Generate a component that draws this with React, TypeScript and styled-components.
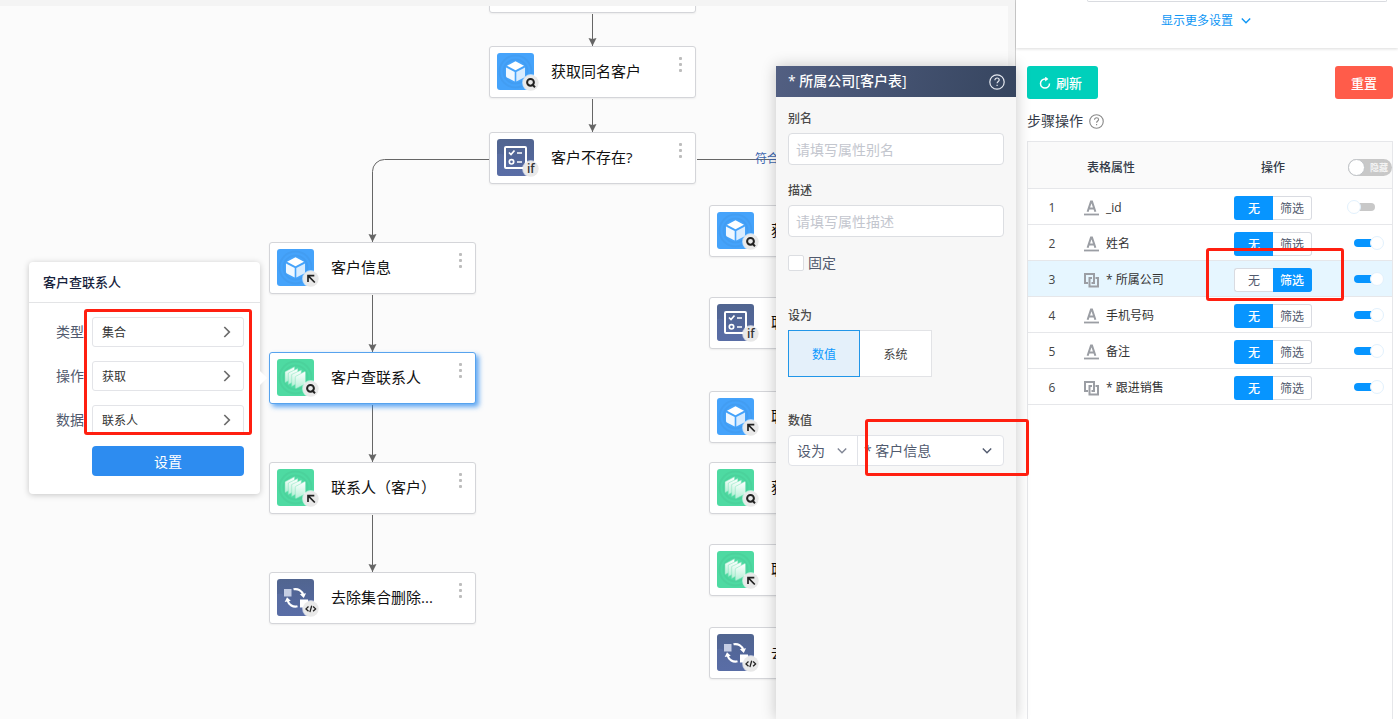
import React, { useState } from 'react';
import styled, { createGlobalStyle, css } from 'styled-components';

const GlobalStyle = createGlobalStyle`
  *, *::before, *::after { box-sizing: border-box; }
  body {
    margin: 0;
    font-family: "Open Sans", "Noto Sans CJK SC", sans-serif;
    font-size: 12px;
    color: #333;
    background: #fff;
  }
  button, input, select { font-family: inherit; margin: 0; }
  button { cursor: pointer; padding: 0; }
`;

/* ---------- page ---------- */

const Page = styled.div`
  display: flex;
  min-height: 100vh;
  overflow: hidden;
`;

const Workspace = styled.main`
  position: relative;
  flex: 1;
  min-width: 0;
  z-index: 1;
`;

const Canvas = styled.div`
  position: absolute;
  inset: 0;
  overflow: hidden;
  background: #fbfbfb;
  border-top: 6px solid #f4f4f4;
  border-right: 7px solid #f4f4f4;
`;

const Plane = styled.div`
  position: absolute;
  left: 0;
  top: -6px;
`;

const Highlight = styled.div<{ $x: number; $y: number; $w: number; $h: number }>`
  position: absolute;
  left: ${(p) => p.$x}px;
  top: ${(p) => p.$y}px;
  width: ${(p) => p.$w}px;
  height: ${(p) => p.$h}px;
  border: 3px solid #ff1f10;
  border-radius: 3px;
  pointer-events: none;
`;

/* ---------- flow nodes ---------- */

const Edges = styled.svg`
  position: absolute;
  left: 0;
  top: 0;
  overflow: visible;
`;

const EdgeLabel = styled.span`
  position: absolute;
  left: 755px;
  top: 150px;
  line-height: 18px;
  white-space: nowrap;
  color: #3f68b0;
`;

const NodeBox = styled.div<{ $x: number; $y: number; $active?: boolean }>`
  position: absolute;
  left: ${(p) => p.$x}px;
  top: ${(p) => p.$y}px;
  width: 207px;
  height: 52px;
  display: flex;
  align-items: flex-start;
  padding: 6px 13px 0 7px;
  background: #fff;
  border: 1px solid #d4d5d9;
  border-radius: 3px;
  box-shadow: 0 1px 2px rgba(0, 0, 0, 0.06);
  ${(p) =>
    p.$active &&
    css`
      border-color: #57a3ee;
      box-shadow: 3px 3px 5px rgba(45, 140, 240, 0.75);
    `}
`;

const NodeTitle = styled.span`
  flex: 1;
  margin-left: 10px;
  font-size: 15px;
  line-height: 36px;
  white-space: nowrap;
  color: #111;
`;

const MoreButton = styled.button`
  display: flex;
  flex-direction: column;
  gap: 3px;
  margin-top: 4px;
  border: 0;
  background: none;
  i {
    width: 3px;
    height: 3px;
    border-radius: 1px;
    background: #bdbdbd;
  }
`;

type Kind = 'cube' | 'check' | 'stack' | 'cycle';
type Badge = 'search' | 'arrow' | 'if' | 'code';

const fills: Record<Kind, string> = {
  cube: '#45a3fb',
  check: 'url(#navy)',
  stack: '#4edaa2',
  cycle: 'url(#navy)',
};

function NodeIcon({ kind, badge }: { kind: Kind; badge: Badge }) {
  return (
    <svg width="44" height="40" viewBox="0 0 44 40" fill="none" aria-hidden="true">
      <rect width="37" height="37" rx="3" fill={fills[kind]} />
      {(kind === 'cube' || kind === 'stack') && (
        <g stroke="#000" strokeOpacity=".035" strokeWidth="2">
          <circle cx="18.5" cy="18.5" r="12" />
          <circle cx="18.5" cy="18.5" r="16" />
        </g>
      )}
      {(kind === 'check' || kind === 'cycle') && (
        <path d="M0 15c5-2 8 2 9 6s7 7 12 6 9-3 16-1v8a3 3 0 0 1-3 3H3a3 3 0 0 1-3-3z" fill="#5f73ab" fillOpacity=".45" />
      )}
      {kind === 'cube' && (
        <g>
          <path d="M18.500 8.200 27 12.700 18.500 17.200 10 12.700z" fill="#fff" />
          <path d="M9 14.500 17.700 19v9.500L9.800 24.400a1.500 1.500 0 0 1-.8-1.300z" fill="#f0f8ff" />
          <path d="M28 14.500 19.300 19v9.500l7.900-4.100a1.500 1.500 0 0 0 .8-1.300z" fill="#d8ecff" />
        </g>
      )}
      {kind === 'check' && (
        <g stroke="#fff">
          <rect x="8" y="8" width="21" height="21" rx="1" strokeWidth="2" />
          <path d="m12 13.500 2 2 3.500-4M20 14h5M20 23h5" strokeWidth="1.700" />
          <circle cx="14.500" cy="22.800" r="2.200" strokeWidth="1.700" />
        </g>
      )}
      {kind === 'stack' && (
        <g stroke="#7fe3bb" strokeWidth=".5">
          <path d="m8 12.800 9.500-5v11L8 23.500z" fill="url(#sheet)" />
          <path d="m11.300 14 9.500-4.500v11l-9.500 5z" fill="url(#sheet)" />
          <path d="m14.700 15.500 9.600-4.500v11l-9.600 5.400z" fill="url(#sheet)" />
          <path d="M18.300 18.200a1 1 0 0 1 .6-.9l8.300-4.500a.9.900 0 0 1 1.300.8v11.200l-9 4.500a.9.900 0 0 1-1.200-.8z" fill="url(#sheet)" />
        </g>
      )}
      {kind === 'cycle' && (
        <g>
          <rect x="7" y="10" width="7.500" height="7.500" fill="#c5cee4" />
          <rect x="23" y="20.500" width="8" height="8" fill="#fff" />
          <path d="M16.500 10.300a8 8 0 0 1 9.700 5.700M20.500 27.300a8 8 0 0 1-9.900-5.800" stroke="#fff" strokeWidth="2.200" />
          <path d="m22.800 15.200 6.200-.9-2.200 4.700zM7.700 23l2.300-4.700 3.800 3.500z" fill="#fff" />
        </g>
      )}
      <circle cx="33.800" cy="29.800" r="8.700" fill="#fff" fillOpacity=".6" />
      <circle cx="33.800" cy="29.800" r="7.900" fill="#e9e9e9" />
      {badge === 'search' && (
        <g stroke="#222" strokeWidth="2">
          <circle cx="33.500" cy="29.300" r="3.400" />
          <path d="m35 31.300 3 3" />
        </g>
      )}
      {badge === 'arrow' && <path d="M31 33v-6.300h6.300M31 26.700l6.800 6.800" stroke="#222" strokeWidth="1.700" />}
      {badge === 'if' && (
        <text x="33.800" y="34" textAnchor="middle" fontSize="12" fontWeight="600" fill="#333">
          if
        </text>
      )}
      {badge === 'code' && (
        <path d="m31.500 27.500-2.500 2.400 2.500 2.400M36.100 27.500l2.500 2.400-2.500 2.400M34.700 26.700l-1.800 6.400" stroke="#222" strokeWidth="1.300" />
      )}
    </svg>
  );
}

interface FlowNode {
  x: number;
  y: number;
  kind: Kind;
  badge: Badge;
  title: string;
  active?: boolean;
}

const nodes: FlowNode[] = [
  { x: 489, y: 46, kind: 'cube', badge: 'search', title: '获取同名客户' },
  { x: 489, y: 132, kind: 'check', badge: 'if', title: '客户不存在?' },
  { x: 269, y: 242, kind: 'cube', badge: 'arrow', title: '客户信息' },
  { x: 269, y: 352, kind: 'stack', badge: 'search', title: '客户查联系人', active: true },
  { x: 269, y: 462, kind: 'stack', badge: 'arrow', title: '联系人（客户）' },
  { x: 269, y: 572, kind: 'cycle', badge: 'code', title: '去除集合删除...' },
  { x: 709, y: 205, kind: 'cube', badge: 'search', title: '获' },
  { x: 709, y: 297, kind: 'check', badge: 'if', title: '联' },
  { x: 709, y: 391, kind: 'cube', badge: 'arrow', title: '联' },
  { x: 709, y: 462, kind: 'stack', badge: 'search', title: '获' },
  { x: 709, y: 544, kind: 'stack', badge: 'arrow', title: '联' },
  { x: 709, y: 627, kind: 'cycle', badge: 'code', title: '去' },
];

const arrows = [
  [592, 14, 46],
  [592, 99, 132],
  [372, 295, 352],
  [372, 405, 462],
  [372, 515, 572],
];

function Flow() {
  return (
    <Plane>
      <Edges width="1" height="1" aria-hidden="true">
        <defs>
          <linearGradient id="navy" x1="0" y1="0" x2="0" y2="1">
            <stop offset="0" stopColor="#516590" />
            <stop offset="1" stopColor="#5468a2" />
          </linearGradient>
          <linearGradient id="sheet" x1="0" y1="0" x2="0" y2="1">
            <stop offset="0" stopColor="#fff" />
            <stop offset="1" stopColor="#b4f0d6" />
          </linearGradient>
          <marker id="head" markerWidth="9" markerHeight="9" refX="8" refY="4.500" orient="auto" markerUnits="userSpaceOnUse">
            <path d="M0 .5 8 4.500 0 8.500 1 4.500z" fill="#666" />
          </marker>
        </defs>
        <g stroke="#666" fill="none">
          {arrows.map(([x, from, to]) => (
            <path key={`${x}-${from}`} d={`M${x + 0.5} ${from}V${to}`} markerEnd="url(#head)" />
          ))}
          <path d="M489 159.500H384.500a12 12 0 0 0-12 12V242" markerEnd="url(#head)" />
          <path d="M697 159.500H790" />
        </g>
      </Edges>
      <EdgeLabel>符合</EdgeLabel>
      <NodeBox $x={489} $y={-39} />
      {nodes.map((n) => (
        <NodeBox key={`${n.x}-${n.y}`} $x={n.x} $y={n.y} $active={n.active}>
          <NodeIcon kind={n.kind} badge={n.badge} />
          <NodeTitle>{n.title}</NodeTitle>
          <MoreButton aria-haspopup="menu">
            <i />
            <i />
            <i />
          </MoreButton>
        </NodeBox>
      ))}
    </Plane>
  );
}

/* ---------- node popover ---------- */

const Popover = styled.section`
  position: absolute;
  left: 29px;
  top: 262px;
  width: 231px;
  padding-bottom: 18px;
  background: #fff;
  border-radius: 4px;
  box-shadow: 0 1px 6px rgba(0, 0, 0, 0.22);
  &::after {
    content: '';
    position: absolute;
    right: -5px;
    top: 111px;
    width: 10px;
    height: 10px;
    background: #fff;
    transform: rotate(45deg);
  }
`;

const PopoverTitle = styled.h2`
  margin: 0;
  padding: 0 14px;
  font-size: 13px;
  font-weight: 500;
  line-height: 40px;
  color: #17233d;
  border-bottom: 1px solid #e3e4e6;
`;

const Fields = styled.div`
  display: flex;
  flex-direction: column;
  gap: 14px;
  padding: 14px 16px 11px 27px;
`;

const Field = styled.div`
  display: flex;
  align-items: center;
  justify-content: space-between;
  font-size: 14px;
  line-height: 18px;
  color: #515a6e;
`;

const PickButton = styled.button`
  display: flex;
  align-items: center;
  justify-content: space-between;
  width: 152px;
  height: 30px;
  padding: 0 12px 0 9px;
  font-size: 12px;
  color: #333;
  background: #fff;
  border: 1px solid #e3e4e8;
  border-radius: 3px;
`;

const PrimaryButton = styled.button`
  display: block;
  width: 152px;
  height: 30px;
  margin-left: 63px;
  font-size: 14px;
  color: #fff;
  background: #2d8cf0;
  border: 0;
  border-radius: 4px;
`;

const pickers = [
  ['类型', '集合'],
  ['操作', '获取'],
  ['数据', '联系人'],
];

function NodePopover() {
  return (
    <Popover>
      <PopoverTitle>客户查联系人</PopoverTitle>
      <Fields>
        {pickers.map(([label, value], i) => (
          <Field key={label}>
            <label htmlFor={`pick-${i}`}>{label}</label>
            <PickButton id={`pick-${i}`}>
              {value}
              <svg width="8" height="12" viewBox="0 0 8 12" fill="none" stroke="#6b6b6b" strokeWidth="1.700">
                <path d="m1.300 1 5 5-5 5" />
              </svg>
            </PickButton>
          </Field>
        ))}
      </Fields>
      <PrimaryButton>设置</PrimaryButton>
      <Highlight $x={55} $y={47} $w={168} $h={126} />
    </Popover>
  );
}

/* ---------- property panel ---------- */

const PropertyPanel = styled.section`
  position: absolute;
  top: 66px;
  right: -1px;
  bottom: 0;
  width: 240px;
  background: #f7f7f7;
  box-shadow: 0 0 14px rgba(0, 0, 0, 0.22);
`;

const PanelHeader = styled.header`
  display: flex;
  align-items: center;
  justify-content: space-between;
  height: 31px;
  padding: 0 11px 0 12px;
  background: linear-gradient(100deg, #525f82, #36455f);
  color: #fff;
`;

const PanelTitle = styled.h2`
  margin: 0;
  font-size: 14px;
  font-weight: 500;
  line-height: 29px;
  height: 31px;
`;

const PanelBody = styled.div`
  display: flex;
  flex-direction: column;
  padding: 13px 12px;
`;

const Group = styled.div<{ $gap: number }>`
  display: flex;
  flex-direction: column;
  gap: 5px;
  margin-bottom: ${(p) => p.$gap}px;
`;

const GroupLabel = styled.label`
  font-size: 12px;
  font-weight: 500;
  line-height: 18px;
  color: #4a4a4a;
`;

const TextInput = styled.input`
  width: 100%;
  height: 32px;
  padding: 0 7px;
  font-size: 14px;
  color: #515a6e;
  background: #fff;
  border: 1px solid #dcdee2;
  border-radius: 4px;
  &::placeholder { color: #c3c6ce; }
`;

const FixedRow = styled.label`
  display: flex;
  align-items: center;
  gap: 4px;
  height: 20px;
  margin-bottom: 34px;
  font-size: 14px;
  line-height: 20px;
  color: #515a6e;
`;

const CheckBox = styled.input`
  appearance: none;
  width: 16px;
  height: 16px;
  background: #fff;
  border: 1px solid #dcdee2;
  border-radius: 2px;
  &:checked { background: #2d8cf0; }
`;

const ModeRow = styled.div`
  display: flex;
`;

const ModeButton = styled.button<{ $on: boolean }>`
  width: 72px;
  height: 47px;
  font-size: 12px;
  color: ${(p) => (p.$on ? '#0d99ff' : '#444')};
  background: ${(p) => (p.$on ? '#e4f0fa' : '#fff')};
  border: 1px solid ${(p) => (p.$on ? '#2196e8' : '#e2e3e6')};
  ${(p) => !p.$on && 'border-left: 0;'}
`;

const SelectRow = styled.div`
  display: flex;
  height: 31px;
  background: #fff;
  border: 1px solid #e1e3e8;
  border-radius: 4px;
`;

const SelectCell = styled.div<{ $grow?: boolean }>`
  display: flex;
  align-items: center;
  ${(p) =>
    p.$grow
      ? 'flex: 1; padding: 0 11px 0 6px;'
      : 'width: 69px; padding: 0 10px 0 8px; border-right: 1px solid #e1e3e8;'}
`;

const Select = styled.select`
  appearance: none;
  flex: 1;
  min-width: 0;
  height: 29px;
  padding: 0;
  border: 0;
  background: none;
  font-size: 14px;
  color: #515a6e;
`;

function Chevron({ color }: { color: string }) {
  return (
    <svg width="10" height="6" viewBox="0 0 10 6" fill="none" stroke={color} strokeWidth="1.400" aria-hidden="true">
      <path d="m.8.600 4.200 4.200L9.200.600" />
    </svg>
  );
}

function HelpIcon({ size, color }: { size: number; color: string }) {
  return (
    <svg width={size} height={size} viewBox="0 0 16 16" fill="none" stroke={color} strokeWidth="1.200" aria-hidden="true">
      <circle cx="8" cy="8" r="7.200" />
      <path d="M5.900 6.200c0-1.300.9-2.200 2.200-2.200s2.100.8 2.100 1.900c0 1.500-2.100 1.600-2.100 3.400M8.100 10.700v1.400" />
    </svg>
  );
}

function Properties() {
  const [mode, setMode] = useState('数值');
  return (
    <PropertyPanel>
      <PanelHeader>
        <PanelTitle>* 所属公司[客户表]</PanelTitle>
        <HelpIcon size={16} color="#e6e9f0" />
      </PanelHeader>
      <PanelBody>
        <Group $gap={17}>
          <GroupLabel htmlFor="alias">别名</GroupLabel>
          <TextInput id="alias" placeholder="请填写属性别名" />
        </Group>
        <Group $gap={16}>
          <GroupLabel htmlFor="desc">描述</GroupLabel>
          <TextInput id="desc" placeholder="请填写属性描述" />
        </Group>
        <FixedRow>
          <CheckBox type="checkbox" />
          固定
        </FixedRow>
        <Group $gap={35}>
          <GroupLabel as="span">设为</GroupLabel>
          <ModeRow>
            {['数值', '系统'].map((m) => (
              <ModeButton key={m} $on={mode === m} aria-pressed={mode === m} onClick={() => setMode(m)}>
                {m}
              </ModeButton>
            ))}
          </ModeRow>
        </Group>
        <Group $gap={0}>
          <GroupLabel htmlFor="value">数值</GroupLabel>
          <SelectRow>
            <SelectCell>
              <Select id="operator">
                <option>设为</option>
              </Select>
              <Chevron color="#808695" />
            </SelectCell>
            <SelectCell $grow>
              <Select id="value">
                <option>* 客户信息</option>
              </Select>
              <Chevron color="#515a6e" />
            </SelectCell>
          </SelectRow>
        </Group>
      </PanelBody>
      <Highlight $x={89} $y={353} $w={164} $h={57} />
    </PropertyPanel>
  );
}

/* ---------- side panel ---------- */

const Side = styled.aside`
  display: flex;
  flex-direction: column;
  width: 383px;
  background: #fff;
  border-left: 1px solid #cfcfcf;
`;

const MoreSection = styled.div`
  display: flex;
  flex-direction: column;
  align-items: center;
  height: 48px;
  padding: 0 11px 0 71px;
  box-shadow: 0 1px 3px rgba(0, 0, 0, 0.14);
`;

const FieldEdge = styled.div`
  width: 100%;
  height: 2px;
  border: 1px solid #d9dbe0;
  border-top: 0;
  border-radius: 0 0 3px 3px;
`;

const MoreLink = styled.a`
  display: flex;
  align-items: center;
  align-self: flex-start;
  gap: 8px;
  margin: 10px 0 0 74px;
  font-size: 12px;
  line-height: 18px;
  color: #0d96f5;
  text-decoration: none;
`;

const SideBody = styled.div`
  display: flex;
  flex: 1;
  flex-direction: column;
  padding: 18px 5px 0 11px;
`;

const Actions = styled.div`
  display: flex;
  justify-content: space-between;
`;

const ActionButton = styled.button<{ $color: string; $icon?: boolean }>`
  display: flex;
  align-items: center;
  gap: 5px;
  height: 33px;
  padding: 0 16px 0 ${(p) => (p.$icon ? 12 : 16)}px;
  font-size: 13px;
  font-weight: 500;
  color: #fff;
  background: ${(p) => p.$color};
  border: 0;
  border-radius: 3px;
`;

const StepHeading = styled.h3`
  display: flex;
  align-items: center;
  gap: 6px;
  margin: 12px 0 10px;
  font-size: 14px;
  font-weight: 400;
  line-height: 20px;
  color: #333a48;
`;

const TableBox = styled.div`
  position: relative;
  flex: 1;
  border: 1px solid #e6e7ea;
  border-bottom: 0;
`;

const Table = styled.table`
  width: 100%;
  table-layout: fixed;
  border-collapse: separate;
  border-spacing: 0;
  th, td {
    padding: 0;
    border-bottom: 1px solid #e6e7ea;
    text-align: left;
  }
  td { padding-top: 2px; }
`;

const HeadCell = styled.th<{ $pad: number; $w?: number; $center?: boolean }>`
  && {
    height: 47px;
    width: ${(p) => (p.$w ? `${p.$w}px` : 'auto')};
    padding: 4px 0 0 ${(p) => p.$pad}px;
    text-align: ${(p) => (p.$center ? 'center' : 'left')};
  }
  background: #fafafa;
  font-size: 12px;
  font-weight: 500;
  color: #333a48;
`;

const Row = styled.tr<{ $active: boolean }>`
  height: 36px;
  background: ${(p) => (p.$active ? '#e6f6ff' : '#fff')};
`;

const IndexCell = styled.td`
  && { text-align: center; }
  font-size: 12px;
  color: #444;
`;

const NameWrap = styled.div`
  display: flex;
  align-items: center;
  gap: 7px;
  padding-left: 8px;
  font-size: 12px;
  line-height: 18px;
  color: #333;
`;

const Segments = styled.div`
  display: flex;
  width: 78px;
  height: 24px;
  margin: 0 auto;
`;

const Segment = styled.button<{ $on: boolean }>`
  width: 39px;
  height: 24px;
  font-size: 12px;
  font-weight: ${(p) => (p.$on ? 500 : 400)};
  color: ${(p) => (p.$on ? '#fff' : '#515a6e')};
  background: ${(p) => (p.$on ? '#0795ff' : '#fff')};
  border: 1px solid ${(p) => (p.$on ? '#0795ff' : '#d9dbe1')};
  &:first-child { border-radius: 3px 0 0 3px; border-right-width: 0; }
  &:last-child { border-radius: 0 3px 3px 0; border-left-width: 0; }
`;

const SwitchCell = styled.td`
  && { padding: 0 0 0 14px; }
  line-height: 0;
`;

const Switch = styled.input`
  appearance: none;
  position: relative;
  display: block;
  width: 37px;
  height: 14px;
  &::before {
    content: '';
    position: absolute;
    left: 7px;
    top: 3px;
    width: 21px;
    height: 8px;
    border-radius: 4px;
    background: #c8c8c8;
  }
  &::after {
    content: '';
    position: absolute;
    left: 0;
    top: 0;
    width: 14px;
    height: 14px;
    border-radius: 7px;
    background: #fff;
    border: 1px solid #e2f1fd;
  }
  &:checked::before { background: #0795ff; }
  &:checked::after { left: 23px; }
`;

const HideSwitch = styled.button`
  display: flex;
  align-items: center;
  justify-content: space-between;
  width: 44px;
  height: 17px;
  padding-right: 4px;
  font-size: 9px;
  font-weight: 700;
  line-height: 17px;
  color: #f4f4f4;
  background: #c8c8c8;
  border: 0;
  border-radius: 9px;
  &::before {
    content: '';
    width: 17px;
    height: 17px;
    border: 1px solid #c0c4c8;
    border-radius: 9px;
    background: #fff;
  }
`;

function TextTypeIcon() {
  return (
    <svg width="15" height="16" viewBox="0 0 15 16" fill="none" stroke="#9b9ea4" aria-hidden="true">
      <path d="M3.600 11.700 7 1.600h1l3.400 10.100M4.900 8.500h5.200" strokeWidth="2" />
      <path d="M0 14.500h15" strokeWidth="1.800" />
    </svg>
  );
}

function LinkTypeIcon() {
  return (
    <svg width="15" height="16" viewBox="0 0 15 16" fill="none" stroke="#9b9ea4" strokeWidth="2" aria-hidden="true">
      <path d="M4 11H1V2h9v9H7.500" />
      <path d="M11.500 6H14v8.500H5.500V6H8" />
    </svg>
  );
}

interface Attribute {
  name: string;
  relation?: boolean;
  filter?: boolean;
  visible: boolean;
}

const attributes: Attribute[] = [
  { name: '_id', visible: false },
  { name: '姓名', visible: true },
  { name: '* 所属公司', relation: true, filter: true, visible: true },
  { name: '手机号码', visible: true },
  { name: '备注', visible: true },
  { name: '* 跟进销售', relation: true, visible: true },
];

function SidePanel() {
  return (
    <Side>
      <MoreSection>
        <FieldEdge />
        <MoreLink href="#more">
          显示更多设置
          <Chevron color="#0d96f5" />
        </MoreLink>
      </MoreSection>
      <SideBody>
        <Actions>
          <ActionButton $color="#00d0bb" $icon>
            <svg width="12" height="12" viewBox="0 0 12 12" fill="none" stroke="#fff" strokeWidth="1.500" aria-hidden="true">
              <path d="M7.200 2H6a4.500 4.500 0 1 0 4.500 4.500" />
              <path d="m6.200-.5 3.200 2.500-3.200 2.500z" fill="#fff" stroke="none" />
            </svg>
            刷新
          </ActionButton>
          <ActionButton $color="#ff5c4a">重置</ActionButton>
        </Actions>
        <StepHeading>
          步骤操作
          <HelpIcon size={15} color="#8a8a8a" />
        </StepHeading>
        <TableBox>
          <Table>
            <thead>
              <tr>
                <HeadCell $pad={0} $w={48} />
                <HeadCell $pad={11}>表格属性</HeadCell>
                <HeadCell $pad={0} $w={120} $center>
                  操作
                </HeadCell>
                <HeadCell $pad={15} $w={59}>
                  <HideSwitch role="switch" aria-checked="false">
                    隐藏
                  </HideSwitch>
                </HeadCell>
              </tr>
            </thead>
            <tbody>
              {attributes.map((a, i) => (
                <Row key={a.name} $active={!!a.filter}>
                  <IndexCell>{i + 1}</IndexCell>
                  <td>
                    <NameWrap>
                      {a.relation ? <LinkTypeIcon /> : <TextTypeIcon />}
                      {a.name}
                    </NameWrap>
                  </td>
                  <td>
                    <Segments>
                      <Segment $on={!a.filter} aria-pressed={!a.filter}>
                        无
                      </Segment>
                      <Segment $on={!!a.filter} aria-pressed={!!a.filter}>
                        筛选
                      </Segment>
                    </Segments>
                  </td>
                  <SwitchCell>
                    <Switch type="checkbox" aria-label={a.name} defaultChecked={a.visible} />
                  </SwitchCell>
                </Row>
              ))}
            </tbody>
          </Table>
          <Highlight $x={178} $y={106} $w={138} $h={53} />
        </TableBox>
      </SideBody>
    </Side>
  );
}

export default function App() {
  return (
    <>
      <GlobalStyle />
      <Page>
        <Workspace>
          <Canvas>
            <Flow />
          </Canvas>
          <NodePopover />
          <Properties />
        </Workspace>
        <SidePanel />
      </Page>
    </>
  );
}
